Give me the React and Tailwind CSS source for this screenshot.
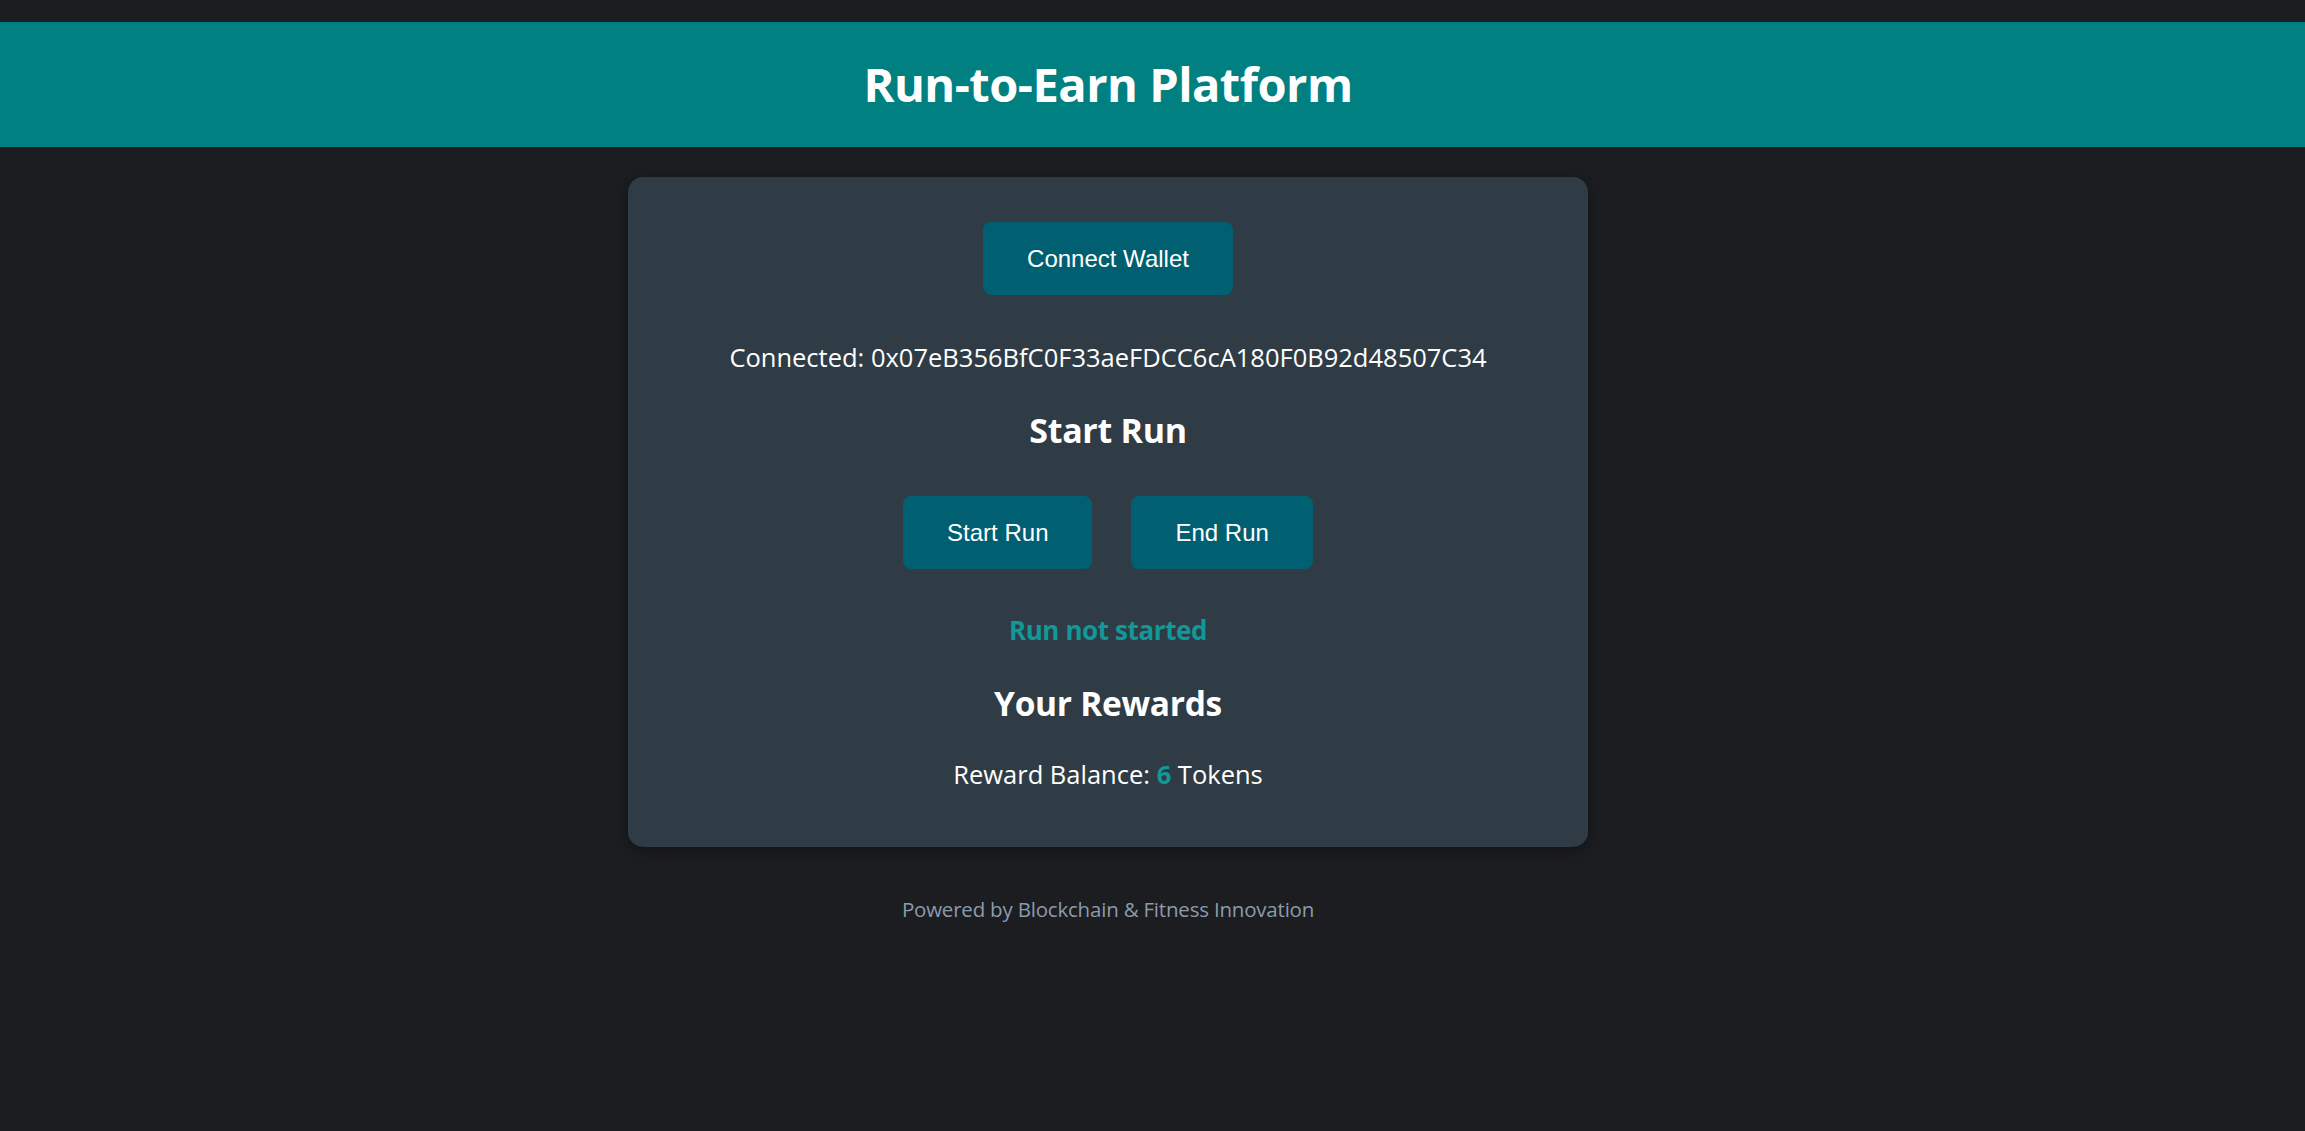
import { useState } from 'react'

function App() {
  const [running, setRunning] = useState(false)
  const account = '0x07eB356BfC0F33aeFDCC6cA180F0B92d48507C34'
  const rewards = 6

  const btn =
    "h-[73px] px-[44px] rounded-[8px] bg-[#005f70] text-white text-[24px] font-['Liberation_Sans',Arial,sans-serif] hover:bg-[#00798d] transition-colors cursor-pointer"

  return (
    <div className="min-h-screen bg-[#1c1d21] pt-[22px] font-['Open_Sans',sans-serif] text-white">
      <header className="bg-[#008080] h-[125px] flex items-center justify-center pr-[89px]">
        <h1 className="text-[47px] font-bold leading-none tracking-[-0.5px]">Run-to-Earn Platform</h1>
      </header>

      <main className="flex flex-col items-center pr-[89px] pt-[30px]">
        <div className="w-[960px] bg-[#2f3c45] rounded-[15px] shadow-[0_4px_14px_rgba(0,0,0,0.35)] flex flex-col items-center pt-[45px] pb-[55px]">
          <button className={btn}>Connect Wallet</button>

          <p className="mt-[44px] text-[25.5px] leading-[36px]">Connected: {account}</p>

          <h2 className="mt-[33px] text-[34px] leading-[44px] font-bold tracking-[-0.3px]">Start Run</h2>

          <div className="mt-[44px] flex gap-[39px]">
            <button className={btn} onClick={() => setRunning(true)}>Start Run</button>
            <button className={btn} onClick={() => setRunning(false)}>End Run</button>
          </div>

          <p className="mt-[43px] text-[26px] leading-[36px] font-bold text-[#129898] tracking-[-0.4px]">
            {running ? 'Run in progress' : 'Run not started'}
          </p>

          <h2 className="mt-[33px] text-[33.5px] leading-[44px] font-bold tracking-[-0.3px]">Your Rewards</h2>

          <p className="mt-[31px] text-[25.5px] leading-[36px]">
            Reward Balance: <span className="font-bold text-[#129898]">{rewards}</span> Tokens
          </p>
        </div>

        <footer className="mt-[47px] text-[20.5px] leading-[30px] text-[#8b9bab] tracking-[-0.2px]">
          Powered by Blockchain &amp; Fitness Innovation
        </footer>
      </main>
    </div>
  )
}

export default App
